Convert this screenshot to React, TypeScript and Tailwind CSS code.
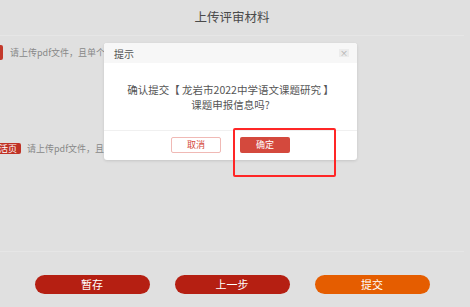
import React from "react";

export default function App() {
  return (
    <div
      className="relative w-[470px] h-[307px] overflow-hidden bg-[#e0e0e0]"
      style={{ fontFamily: '"Noto Sans CJK SC", "Noto Sans", sans-serif' }}
    >
      <div className="pr-[6px]">
        <div className="h-[36px] flex items-center justify-center border-b border-[#e6e6e6] text-[12.5px] text-[#4a4a4a]">
          上传评审材料
        </div>
        <div className="h-[216px] pt-[9px] border-b border-[#e6e6e6]">
          <div className="flex items-center h-[15px]">
            <div className="w-[3px] h-[15px] bg-[#c3392b] rounded-r-[2px]" />
            <span className="ml-[7px] text-[9px] text-[#888] whitespace-nowrap">请上传pdf文件，且单个文件不超过</span>
          </div>
          <div className="mt-[83px] flex items-center h-[11px]">
            <div className="ml-[-23px] h-[11px] px-[4px] bg-[#bf3226] rounded-[2px] text-[9px] leading-[11px] text-white whitespace-nowrap">
              上传活页
            </div>
            <span className="ml-[6px] text-[9px] text-[#888] whitespace-nowrap">请上传pdf文件，且单个文件不超过</span>
          </div>
        </div>
        <div className="flex justify-center gap-[25px] pt-[23px]">
          <button className="w-[115px] h-[19px] rounded-full bg-[#b51f12] text-white text-[11px] leading-[19px]">暂存</button>
          <button className="w-[115px] h-[19px] rounded-full bg-[#b51f12] text-white text-[11px] leading-[19px]">上一步</button>
          <button className="w-[115px] h-[19px] rounded-full bg-[#e55d00] text-white text-[11px] leading-[19px]">提交</button>
        </div>
      </div>

      <div className="absolute left-[104px] top-[43px] w-[253px] h-[117px] bg-white rounded-[3px] shadow-[0_1px_3px_rgba(0,0,0,0.12)] flex flex-col">
        <div className="h-[20px] bg-[#f7f7f7] rounded-t-[3px] flex items-center justify-between pl-[10px] pr-[8px]">
          <span className="text-[10px] text-[#555]">提示</span>
          <span className="w-[10px] h-[8px] bg-[#ececec] flex items-center justify-center text-[8px] leading-none text-[#aaa]">×</span>
        </div>
        <div className="h-[68px] border-b border-[#f0f0f0] flex flex-col items-center pt-[19px] text-[10.5px] leading-[15px] text-[#555]">
          <div>确认提交【 龙岩市2022中学语文课题研究 】</div>
          <div>课题申报信息吗?</div>
        </div>
        <div className="flex justify-center gap-[19px] pt-[6px]">
          <button className="w-[50px] h-[16px] rounded-[2px] border border-[#f0b9b5] bg-white text-[9px] leading-[14px] text-[#d4473b]">取消</button>
          <button className="w-[50px] h-[16px] rounded-[2px] bg-[#d4493d] text-[9px] leading-[16px] text-white">确定</button>
        </div>
      </div>

      <div className="absolute left-[233px] top-[128px] w-[103px] h-[49px] border-2 border-[#ff2626] rounded-[2px]" />
    </div>
  );
}
